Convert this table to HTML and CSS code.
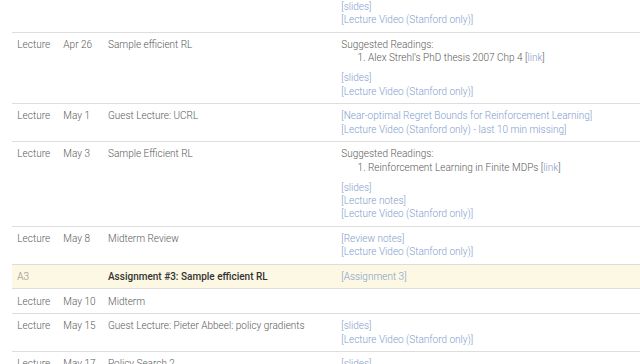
FILE: index.html
```html
<!DOCTYPE html>
<html>
<head>
<meta charset="utf-8">
<link rel="stylesheet" href="styles.css">
</head>
<body>
<div class="page">
<table class="schedule">
  <colgroup>
    <col class="c-type"><col class="c-date"><col class="c-topic"><col class="c-mat">
  </colgroup>
  <tbody>
    <tr>
      <td>Lecture</td><td>Apr 24</td><td>Policy Search 1</td>
      <td>Suggested Readings:
        <ol><li>Policy Gradient Methods [<a href="#">link</a>]</li></ol>
        <a href="#">[slides]</a><br><a href="#">[Lecture Video (Stanford only)]</a>
      </td>
    </tr>
    <tr>
      <td>Lecture</td><td>Apr 26</td><td>Sample efficient RL</td>
      <td>Suggested Readings:
        <ol><li>Alex Strehl's PhD thesis 2007 Chp 4 [<a href="#">link</a>]</li></ol>
        <a href="#">[slides]</a><br><a href="#">[Lecture Video (Stanford only)]</a>
      </td>
    </tr>
    <tr>
      <td>Lecture</td><td>May 1</td><td>Guest Lecture: UCRL</td>
      <td><a href="#">[Near-optimal Regret Bounds for Reinforcement Learning]</a><br><a href="#">[Lecture Video (Stanford only) - last 10 min missing]</a></td>
    </tr>
    <tr>
      <td>Lecture</td><td>May 3</td><td>Sample Efficient RL</td>
      <td>Suggested Readings:
        <ol><li>Reinforcement Learning in Finite MDPs [<a href="#">link</a>]</li></ol>
        <a href="#">[slides]</a><br><a href="#">[Lecture notes]</a><br><a href="#">[Lecture Video (Stanford only)]</a>
      </td>
    </tr>
    <tr>
      <td>Lecture</td><td>May 8</td><td>Midterm Review</td>
      <td><a href="#">[Review notes]</a><br><a href="#">[Lecture Video (Stanford only)]</a></td>
    </tr>
    <tr class="warning">
      <td>A3</td><td></td><td class="strong">Assignment #3: Sample efficient RL</td>
      <td><a href="#">[Assignment 3]</a></td>
    </tr>
    <tr>
      <td>Lecture</td><td>May 10</td><td>Midterm</td><td></td>
    </tr>
    <tr>
      <td>Lecture</td><td>May 15</td><td>Guest Lecture: Pieter Abbeel: policy gradients</td>
      <td><a href="#">[slides]</a><br><a href="#">[Lecture Video (Stanford only)]</a></td>
    </tr>
    <tr>
      <td>Lecture</td><td>May 17</td><td>Policy Search 2</td>
      <td><a href="#">[slides]</a><br><a href="#">[Lecture Video (Stanford only)]</a></td>
    </tr>
  </tbody>
</table>
</div>
</body>
</html>
```
FILE: styles.css
```css
html, body {
  margin: 0;
  padding: 0;
  background: #fff;
  overflow: hidden;
}
body {
  font-family: Roboto, "Liberation Sans", sans-serif;
  font-weight: 300;
  font-size: 10px;
  line-height: 13.33px;
  color: #5a5a5a;
}
.page {
  padding-left: 12px;
  margin-top: -39.33px;
}
.schedule {
  border-collapse: collapse;
  border-spacing: 0;
  width: 640px;
  table-layout: fixed;
}
.c-type { width: 46px; }
.c-date { width: 44.67px; }
.c-topic { width: 233.33px; }
.c-mat { width: auto; }
.schedule td {
  padding: 5.17px 5.33px;
  border-top: 1px solid #ddd;
  vertical-align: top;
  text-align: left;
  white-space: nowrap;
}
.schedule ol {
  margin: 0 0 6.67px 0;
  padding-left: 26.67px;
}
.schedule a {
  color: #7f9dcc;
  text-decoration: none;
}
.schedule tr.warning td {
  background: #fcf8e3;
}
.schedule tr.warning td:first-child {
  color: #8a8a8a;
}
.schedule td.strong {
  font-weight: 500;
  color: #333;
}
```
